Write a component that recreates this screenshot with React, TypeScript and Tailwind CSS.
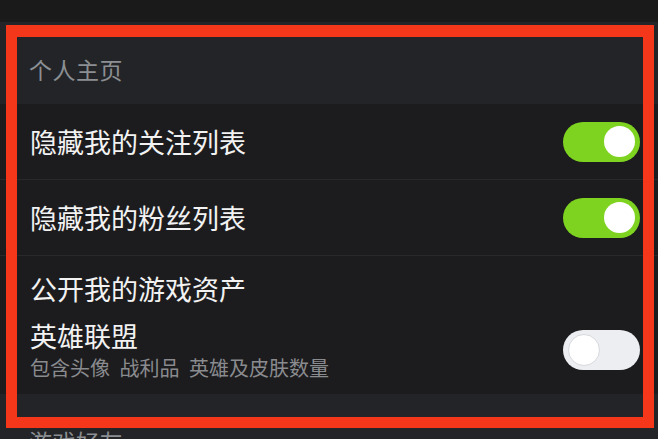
import React from "react";

const font = { fontFamily: '"Noto Sans CJK SC", "Noto Sans", sans-serif' };

function Toggle({ on }: { on: boolean }) {
  return on ? (
    <div className="flex h-[40px] w-[77px] shrink-0 items-center justify-end rounded-full bg-[#7ed321] pr-[5px]">
      <div className="h-[31px] w-[31px] rounded-full bg-white" />
    </div>
  ) : (
    <div className="flex h-[40px] w-[77px] shrink-0 items-center justify-start rounded-full bg-[#eceef2] pl-[5px]">
      <div className="h-[32px] w-[32px] rounded-full border border-[#d6d8dc] bg-white" />
    </div>
  );
}

function SectionHeader({ title }: { title: string }) {
  return (
    <div className="h-[82px] bg-[#232427] pl-[29px] pt-[35px]">
      <div className="text-[23px] leading-[24px] tracking-[0.5px] text-[#8b8f93]">{title}</div>
    </div>
  );
}

function ToggleRow({ label, on }: { label: string; on: boolean }) {
  return (
    <div className="flex h-[76px] items-center justify-between border-b border-[#29292b] bg-[#1c1c1e] pl-[30px] pr-[18px]">
      <div className="text-[27px] leading-[34px] text-[#f2f2f2]">{label}</div>
      <Toggle on={on} />
    </div>
  );
}

export default function App() {
  return (
    <div className="relative h-[439px] w-[658px] overflow-hidden bg-[#1c1c1e]" style={font}>
      <div className="h-[22px] bg-[#1a1a1a]" />
      <SectionHeader title="个人主页" />
      <ToggleRow label="隐藏我的关注列表" on={true} />
      <ToggleRow label="隐藏我的粉丝列表" on={true} />
      <div className="flex h-[138px] flex-col bg-[#1c1c1e] pl-[30px] pr-[18px] pt-[16px]">
        <div className="text-[27px] leading-[34px] text-[#f2f2f2]">公开我的游戏资产</div>
        <div className="mt-[13px] flex items-center justify-between">
          <div className="flex flex-col">
            <div className="text-[27px] leading-[34px] text-[#f2f2f2]">英雄联盟</div>
            <div className="mt-[2px] text-[20px] leading-[26px] text-[#8a8b8f] [word-spacing:5px]">包含头像 战利品 英雄及皮肤数量</div>
          </div>
          <Toggle on={false} />
        </div>
      </div>
      <SectionHeader title="游戏好友" />
      <div className="pointer-events-none absolute left-[6px] top-[25px] h-[403px] w-[648px] border-[11px] border-t-[12px] border-[#f4361b]" />
    </div>
  );
}
